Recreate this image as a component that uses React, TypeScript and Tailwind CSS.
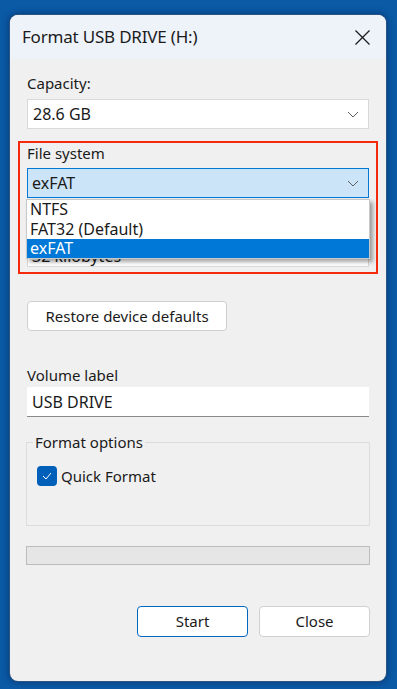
import React from "react";

const font = { fontFamily: '"Noto Sans", "Open Sans", sans-serif' };

function Chevron() {
  return (
    <svg width="12" height="7" viewBox="0 0 12 7" className="shrink-0">
      <path d="M1 1 L6 6 L11 1" fill="none" stroke="#5f5f5f" strokeWidth="1" />
    </svg>
  );
}

export default function App() {
  return (
    <div
      className="w-[397px] h-[689px] bg-[#0b5aa6] pl-[10px] pt-[15px] overflow-hidden"
      style={font}
    >
      <div className="w-[376px] h-[666px] rounded-[8px] bg-[#f0f0f0] overflow-hidden flex flex-col shadow-[0_0_0_1px_#2b5383,0_0_6px_2px_rgba(0,30,70,0.45)] text-[15px] text-[#1a1a1a]">
        {/* title bar */}
        <div className="h-[44px] bg-[#eef3fa] flex items-center justify-between pl-[12px] pr-[16px] shrink-0">
          <span className="text-[17px] text-[#1b1b1b] tracking-[-0.2px]">Format USB DRIVE (H:)</span>
          <svg width="15" height="15" viewBox="0 0 15 15">
            <path d="M0.5 0.5 L14.5 14.5 M14.5 0.5 L0.5 14.5" stroke="#1b1b1b" strokeWidth="1.3" />
          </svg>
        </div>

        {/* body */}
        <div className="flex flex-col px-[8px] pt-[14px]">
          <div className="px-[9px] h-[20px] leading-[20px]">Capacity:</div>
          <div className="mx-[9px] mt-[6px] h-[30px] bg-white border border-[#d9d9d9] flex items-center justify-between pl-[5px] pr-[9px]">
            <span className="text-[16px]">28.6 GB</span>
            <Chevron />
          </div>

          {/* red highlight box */}
          <div className="mt-[12px] h-[133px] border-2 border-[#f52a0c] px-[7px] relative">
            <div className="h-[20px] leading-[20px]">File system</div>
            <div className="mt-[5px] h-[30px] bg-[#cce4f7] border border-[#0078d4] flex items-center justify-between pl-[4px] pr-[9px]">
              <span className="text-[16px]">exFAT</span>
              <Chevron />
            </div>
            <div className="mt-[39px] h-[30px] bg-white border border-[#d9d9d9] pl-[4px] pt-[8px] overflow-hidden">
              <div className="text-[16px] leading-[20px] [clip-path:inset(12px_0_0_0)]">32 kilobytes</div>
            </div>

            {/* dropdown list */}
            <div className="absolute left-[6px] top-[56px] w-[344px] bg-white border border-[#c8c8c8] shadow-[3px_3px_4px_rgba(0,0,0,0.35)] flex flex-col text-[16px]">
              <div className="h-[19px] leading-[19px] pl-[3px]">NTFS</div>
              <div className="h-[20px] leading-[20px] pl-[3px]">FAT32 (Default)</div>
              <div className="h-[19px] leading-[19px] pl-[3px] bg-[#0078d7] text-white">exFAT</div>
            </div>
          </div>

          <div className="mt-[27px] ml-[9px] w-[200px] h-[30px] bg-white border border-[#d0d0d0] rounded-[4px] flex items-center justify-center">
            Restore device defaults
          </div>

          <div className="mt-[34px] px-[9px] h-[20px] leading-[20px]">Volume label</div>
          <div className="mx-[9px] mt-[2px] h-[30px] bg-white border-b border-[#8a8a8a] flex items-center pl-[5px]">
            <span className="text-[16px]">USB DRIVE</span>
          </div>

          {/* group box */}
          <div className="mt-[25px] mx-[8px] h-[84px] border border-[#dcdcdc] relative flex flex-col">
            <span className="absolute left-[6px] top-[-11px] bg-[#f0f0f0] px-[2px] leading-[20px]">
              Format options
            </span>
            <div className="mt-[22px] ml-[10px] flex items-center gap-[4px]">
              <div className="w-[20px] h-[20px] rounded-[4px] bg-[#005fb8] flex items-center justify-center">
                <svg width="10" height="8" viewBox="0 0 10 8">
                  <path d="M1 4 L4 7 L9 1" fill="none" stroke="white" strokeWidth="1" />
                </svg>
              </div>
              <span>Quick Format</span>
            </div>
          </div>

          <div className="mt-[20px] mx-[8px] h-[19px] bg-[#e6e6e6] border border-[#bcbcbc]" />

          <div className="mt-[41px] mx-[8px] flex justify-end gap-[11px]">
            <div className="w-[111px] h-[31px] bg-white border border-[#0067c0] rounded-[4px] flex items-center justify-center">
              Start
            </div>
            <div className="w-[111px] h-[31px] bg-white border border-[#d0d0d0] rounded-[4px] flex items-center justify-center">
              Close
            </div>
          </div>
        </div>
      </div>
    </div>
  );
}
